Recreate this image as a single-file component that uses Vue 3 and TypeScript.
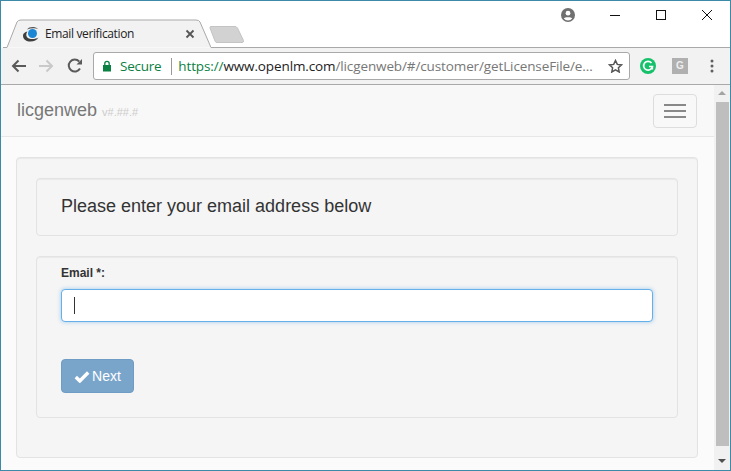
<script setup lang="ts">
const urlHost = 'www.openlm.com'
const urlPath = '/licgenweb/#/customer/getLicenseFile/e...'
</script>

<template>
  <div class="window">
    <header class="titlebar">
      <div class="tab">
        <svg class="tab-shape" width="208" height="29" viewBox="0 0 208 29">
          <path d="M0 28.5H4L14 3Q15 1 18 1H193Q196 1 197 3L208 28.5" fill="#f2f2f2" stroke="#a9a9a9" />
        </svg>
        <svg class="favicon" width="18" height="16" viewBox="0 0 18 16">
          <path d="M1 9.500C1 13.500 4.500 15.500 8.500 15.500C12 15.500 15 14 16.500 11.500C14 13 10 13.500 7 12.500C4 11.500 3.500 8 5.500 5.500C3 6 1 7.500 1 9.500z" fill="#3f3f3f" />
          <path d="M5 3.500C7 .5 13 .2 16 3C13.500 1.800 9 2 5 3.500z" fill="#555" />
          <circle cx="10.500" cy="7.500" r="4.500" fill="#1b86d6" />
        </svg>
        <span class="tab-title">Email verification</span>
        <svg class="tab-close" width="10" height="10" viewBox="0 0 10 10">
          <path d="M1.500 1.500l7 7M8.500 1.500l-7 7" stroke="#555" stroke-width="1.800" />
        </svg>
      </div>
      <svg class="new-tab" width="36" height="20" viewBox="0 0 36 20">
        <path d="M1.500 1.500H26Q27.500 1.500 28.500 3L34.500 15.500Q35 17.500 33 17.500H8Q6.500 17.500 6 16L1 3Q.8 1.500 1.500 1.500z" fill="#d2d2d2" stroke="#c4c4c4" />
      </svg>
      <div class="window-controls">
        <svg class="profile" width="14" height="14" viewBox="0 0 14 14">
          <circle cx="7" cy="7" r="7" fill="#707070" />
          <circle cx="7" cy="5.200" r="2.400" fill="#fff" />
          <path d="M2.800 10.500C3.500 8.700 10.500 8.700 11.200 10.500A5.400 5.400 0 0 1 2.800 10.500z" fill="#fff" />
        </svg>
        <svg class="ctl" width="46" height="12" viewBox="0 0 46 12">
          <path d="M18 6.500h10" stroke="#111" />
        </svg>
        <svg class="ctl" width="46" height="12" viewBox="0 0 46 12">
          <rect x="18.500" y="1.500" width="9" height="9" fill="none" stroke="#111" />
        </svg>
        <svg class="ctl" width="46" height="12" viewBox="0 0 46 12">
          <path d="M18 1l10 10M28 1L18 11" stroke="#111" />
        </svg>
      </div>
    </header>

    <div class="toolbar">
      <svg width="16" height="14" viewBox="0 0 16 14" class="nav-back">
        <path d="M15 7H2M7.500 1.500L2 7l5.500 5.500" fill="none" stroke="#5a5a5a" stroke-width="2" />
      </svg>
      <svg width="16" height="14" viewBox="0 0 16 14" class="nav-forward">
        <path d="M1 7h13M8.500 1.500L14 7l-5.500 5.500" fill="none" stroke="#c9c9c9" stroke-width="2" />
      </svg>
      <svg width="16" height="16" viewBox="0 0 16 16" class="nav-reload">
        <path d="M13 10.500A6 6 0 1 1 12.200 3.500" fill="none" stroke="#5a5a5a" stroke-width="2" />
        <path d="M9.500 6.500H15V1z" fill="#5a5a5a" />
      </svg>
      <div class="omnibox">
        <svg width="10" height="12" viewBox="0 0 10 12" class="lock">
          <rect x="1" y="5" width="8" height="6.500" fill="#0b8043" />
          <path d="M2.800 5V3.500a2.200 2.200 0 0 1 4.400 0V5" fill="none" stroke="#0b8043" stroke-width="1.300" />
        </svg>
        <span class="secure">Secure</span>
        <span class="divider"></span>
        <span class="url"><span class="scheme">https://</span><span class="host">{{ urlHost }}</span><span class="path">{{ urlPath }}</span></span>
        <svg width="15" height="14" viewBox="0 0 15 14" class="star">
          <path d="M7.500 1.500l1.800 3.900 4.200.5-3.100 2.900.8 4.200-3.700-2.100-3.700 2.100.8-4.200L1.500 5.900l4.200-.5z" fill="none" stroke="#555" stroke-width="1.500" />
        </svg>
      </div>
      <svg width="16" height="16" viewBox="0 0 16 16" class="grammarly">
        <circle cx="8" cy="8" r="8" fill="#15c26b" />
        <path d="M11.500 5A4.400 4.400 0 1 0 12.400 8.500H9" fill="none" stroke="#fff" stroke-width="1.700" />
        <path d="M12.400 8.500v3" stroke="#fff" stroke-width="1.500" />
      </svg>
      <span class="ext-g">G</span>
      <svg width="4" height="14" viewBox="0 0 4 14" class="menu-dots">
        <circle cx="2" cy="2" r="1.500" fill="#5f5f5f" />
        <circle cx="2" cy="7" r="1.500" fill="#5f5f5f" />
        <circle cx="2" cy="12" r="1.500" fill="#5f5f5f" />
      </svg>
    </div>

    <div class="viewport">
      <main class="page">
        <nav class="navbar">
          <span class="brand">licgenweb</span>
          <small class="version">v#.##.#</small>
          <button type="button" class="toggle">
            <span class="bar"></span>
            <span class="bar"></span>
            <span class="bar"></span>
          </button>
        </nav>

        <section class="well outer">
          <div class="well heading">Please enter your email address below</div>
          <form class="well form" @submit.prevent>
            <label class="label" for="email">Email *:</label>
            <div class="input">
              <span class="caret"></span>
            </div>
            <button type="submit" class="next">
              <svg width="16" height="13" viewBox="0 0 16 13">
                <path d="M1.800 7l4 4L14.200 2.500" fill="none" stroke="#fff" stroke-width="3.400" />
              </svg>
              Next
            </button>
          </form>
        </section>
      </main>

      <aside class="scrollbar">
        <span class="arrow up"></span>
        <span class="thumb"></span>
        <span class="arrow down"></span>
      </aside>
    </div>
  </div>
</template>

<style>
html,
body {
  margin: 0;
  overflow: hidden;
}
</style>

<style scoped>
.window {
  box-sizing: border-box;
  width: 731px;
  height: 471px;
  border: 1px solid #3b8aa8;
  display: flex;
  flex-direction: column;
  background: #fff;
  font-family: 'Liberation Sans', Arial, sans-serif;
  overflow: hidden;
}

.titlebar {
  height: 47px;
  flex: none;
  display: flex;
  align-items: flex-end;
  position: relative;
}

.titlebar::after {
  content: '';
  position: absolute;
  left: 210px;
  right: 0;
  bottom: 0;
  height: 1px;
  background: #a9a9a9;
}

.tab {
  position: relative;
  width: 208px;
  height: 29px;
  margin-left: 2px;
  display: flex;
  align-items: center;
  z-index: 1;
}

.tab-shape {
  position: absolute;
  left: 0;
  top: 0;
}

.favicon,
.tab-title,
.tab-close {
  position: relative;
}

.favicon {
  margin-left: 19px;
}

.tab-title {
  margin-left: 5px;
  font: 12px 'Open Sans', sans-serif;
  letter-spacing: -0.37px;
  color: #222;
}

.tab-close {
  margin-left: auto;
  margin-right: 16px;
}

.new-tab {
  margin: 0 0 3px -2px;
  align-self: flex-end;
}

.window-controls {
  position: absolute;
  top: 7px;
  right: 0;
  display: flex;
  align-items: center;
  height: 14px;
}

.profile {
  margin-right: 17px;
}

.toolbar {
  height: 37px;
  flex: none;
  box-sizing: border-box;
  background: #f2f2f2;
  border-bottom: 1px solid #a9a9a9;
  display: flex;
  align-items: center;
}

.nav-back {
  margin-left: 10px;
}

.nav-forward {
  margin-left: 11px;
}

.nav-reload {
  margin-left: 13px;
}

.omnibox {
  box-sizing: border-box;
  width: 537px;
  height: 28px;
  margin-left: 10px;
  background: #fff;
  border: 1px solid #a9a9a9;
  border-radius: 3px;
  display: flex;
  align-items: center;
  font: 13.500px 'Open Sans', sans-serif;
  white-space: nowrap;
}

.lock {
  margin-left: 8px;
}

.secure {
  margin-left: 8px;
  color: #0b8043;
  letter-spacing: -0.25px;
}

.divider {
  width: 1px;
  height: 17px;
  margin: 0 6px 0 10px;
  background: #999;
}

.url {
  letter-spacing: -0.12px;
}

.scheme {
  color: #0b8043;
}

.host {
  color: #222;
}

.path {
  color: #777;
}

.star {
  margin-left: auto;
  margin-right: 6px;
}

.grammarly {
  margin-left: 10px;
}

.ext-g {
  width: 16px;
  height: 16px;
  margin-left: 16px;
  background: #b0b0b0;
  color: #eee;
  font-size: 10px;
  font-weight: bold;
  line-height: 16px;
  text-align: center;
}

.menu-dots {
  margin-left: 22px;
}

.viewport {
  flex: 1;
  min-height: 0;
  display: flex;
  background: #fbfbfb;
}

.page {
  flex: 1;
  min-width: 0;
}

.navbar {
  box-sizing: border-box;
  height: 52px;
  padding: 0 17px 0 16px;
  background: #f8f8f8;
  border-bottom: 1px solid #e7e7e7;
  display: flex;
  align-items: center;
}

.brand {
  font-size: 18px;
  color: #777;
}

.version {
  margin: 3px 0 0 5px;
  font-size: 11px;
  color: #ccc;
}

.toggle {
  box-sizing: border-box;
  width: 44px;
  height: 34px;
  margin-left: auto;
  padding: 0 10px;
  background: transparent;
  border: 1px solid #ddd;
  border-radius: 4px;
  display: flex;
  flex-direction: column;
  justify-content: center;
  gap: 4px;
}

.bar {
  display: block;
  height: 2px;
  background: #888;
}

.well {
  box-sizing: border-box;
  background: #f5f5f5;
  border: 1px solid #e3e3e3;
  border-radius: 4px;
  box-shadow: inset 0 1px 1px rgba(0, 0, 0, 0.05);
}

.outer {
  height: 301px;
  margin: 20px 16px 0 15px;
  padding: 20px 19px;
}

.heading {
  height: 58px;
  padding-left: 24px;
  font-size: 18px;
  line-height: 54px;
  color: #333;
}

.form {
  height: 162px;
  margin-top: 20px;
  padding: 9px 24px;
}

.label {
  display: block;
  height: 15px;
  font-size: 12px;
  font-weight: bold;
  line-height: 15px;
  color: #333;
}

.input {
  box-sizing: border-box;
  height: 33px;
  margin-top: 8px;
  padding: 7px 12px;
  background: #fff;
  border: 1px solid #66afe9;
  border-radius: 4px;
  box-shadow: 0 0 4px rgba(102, 175, 233, 0.6);
}

.caret {
  display: block;
  width: 1px;
  height: 17px;
  background: #333;
}

.next {
  box-sizing: border-box;
  width: 73px;
  height: 34px;
  margin-top: 37px;
  padding: 0;
  background: #7aa5cb;
  border: 1px solid #6f9cc4;
  border-radius: 4px;
  display: flex;
  align-items: center;
  justify-content: center;
  gap: 2px;
  color: #fff;
  font: 14px 'Liberation Sans', Arial, sans-serif;
}

.scrollbar {
  width: 16px;
  flex: none;
  background: #f1f1f1;
  display: flex;
  flex-direction: column;
  align-items: center;
}

.arrow {
  width: 0;
  height: 0;
  border-left: 4px solid transparent;
  border-right: 4px solid transparent;
  flex: none;
}

.up {
  margin: 6px 0 7px;
  border-bottom: 4px solid #a3a3a3;
}

.thumb {
  width: 13px;
  flex: 1;
  background: #bebebe;
}

.down {
  margin: 13px 0 7px;
  border-top: 4px solid #505050;
}
</style>
